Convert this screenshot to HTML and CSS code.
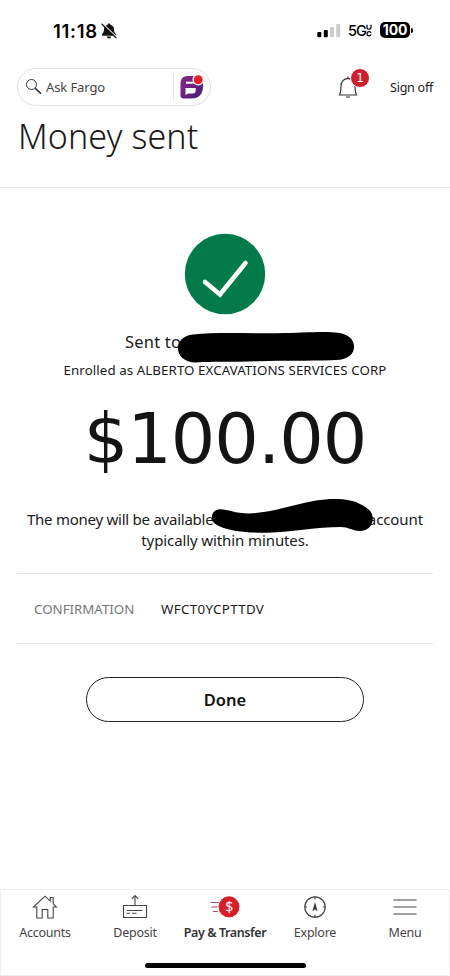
FILE: index.html
```html
<!DOCTYPE html>
<html lang="en">
<head>
<meta charset="utf-8">
<meta name="viewport" content="width=device-width, initial-scale=1">
<title>Money sent</title>
<link rel="stylesheet" href="styles.css">
</head>
<body>
<div class="screen">
  <div class="status">
    <span class="time">11:18</span>
    <svg class="mute" width="16" height="16" viewBox="0 0 16 16"><path d="M8 .5c-.8 0-1.300.5-1.400 1.200C4.300 2.300 3 4 3 6c0 3-.8 4-2 5.200-.5.600-.3 1.500.5 1.500h13c.8 0 1-.9.500-1.500-1.200-1.200-2-2.200-2-5.200 0-2-1.300-3.700-3.600-4.300C9.300 1 8.800.5 8 .5zM5.700 13.400c.3 1.200 1.200 2 2.300 2s2-.8 2.300-2z" fill="#111"/><path d="M2 1.200l13 12.300" stroke="#fff" stroke-width="1.500"/><path d="M1 1.200l14 13.600" stroke="#111" stroke-width="1.200" stroke-linecap="round"/></svg>
    <svg class="signal" width="24" height="16" viewBox="0 0 24 16"><rect x=".3" y="10" width="4" height="5.200" rx="1" fill="#000"/><rect x="6.800" y="8" width="4" height="7.200" rx="1" fill="#000"/><rect x="13" y="5" width="4" height="10.200" rx="1" fill="#ccc"/><rect x="19.200" y="2" width="4" height="13.200" rx="1" fill="#ccc"/></svg>
    <span class="net">5G</span><svg class="uc" width="6" height="13" viewBox="0 0 6 13" fill="none" stroke="#000" stroke-width="1.200"><path d="M1 .8v2.700c0 2.300 4 2.300 4 0V.8M5 9C4.600 7 1 7 1 9.700s3.600 2.700 4 .7"/></svg>
    <span class="battery">100</span><span class="tip"></span>
  </div>

  <header class="header">
    <div class="tools">
      <div class="search">
        <svg width="18" height="18" viewBox="0 0 18 18" fill="none" stroke="#333"><circle cx="6.500" cy="6.500" r="5" stroke-width="1"/><path d="M10.300 10.300l5.700 5.300" stroke-width="1.600"/></svg>
        <span class="ask">Ask Fargo</span>
        <span class="split"></span>
        <svg width="25" height="26" viewBox="0 0 25 26"><defs><linearGradient id="g" x1="0" y1="0" x2="1" y2="1"><stop offset="0" stop-color="#8c2480"/><stop offset="1" stop-color="#42207c"/></linearGradient></defs><path d="M8.500 2H24v10c0 8-4 12.500-11.500 12.500H4.500c-2 0-3-1-3-3V9.500C1.500 5 4 2 8.500 2z" fill="url(#g)"/><path d="M7 8.700h9.500" stroke="#fff" stroke-width="2"/><path d="M6.500 14h10.200v2.500c0 2-1 3-2.800 3H9.300L6.500 21z" fill="#fff"/><circle cx="19.200" cy="5.700" r="5.800" fill="#fff"/><circle cx="19.200" cy="5.700" r="4.500" fill="#e3202b"/></svg>
      </div>
      <div class="alerts">
        <svg width="20" height="24" viewBox="0 0 20 24" fill="none" stroke="#333" stroke-width="1.200"><path d="M1.500 20c1.400-2.500 1.300-5 1.500-9C3.200 6.500 5.500 3.700 10 3.300c4.500.4 6.800 3.200 7 7.700.2 4 .1 6.500 1.500 9zM10 3.300V1.500M8 22h4"/></svg>
        <span class="badge">1</span>
      </div>
      <a class="signoff">Sign off</a>
    </div>
    <h1>Money sent</h1>
  </header>

  <main>
    <svg class="check" width="82" height="82" viewBox="0 0 82 82"><circle cx="41" cy="41" r="40.200" fill="#027a49"/><path d="M21 49l15 12.500L61.500 30" fill="none" stroke="#fff" stroke-width="4.600" stroke-linecap="round"/></svg>
    <p class="sent"><span>Sent to</span><svg class="ink ink-name" width="178" height="34" viewBox="0 0 178 34"><path d="M16 3.500C40 .8 70 2.500 100 2.200 125 2 148 0 161 1.800c11 2 16 6.500 16 14 0 7-5 11.500-14 13-25 1.700-50 .2-80 1.400-25 1-48 .3-64 1.300C8 31.700 1 25 1 17.500 1 10 6.500 4.500 16 3.500z"/></svg></p>
    <p class="enrolled">Enrolled as ALBERTO EXCAVATIONS SERVICES CORP</p>
    <p class="amount">$100.00</p>
    <div class="note">
      <div class="line"><span class="avail">The money will be available</span><span class="acct">account</span></div>
      <div class="within">typically within minutes.</div>
      <svg class="ink ink-acct" width="164" height="36" viewBox="0 0 164 36"><path d="M9 11.200C16 11 24 15.500 39 15.400 62 14.500 84 6 105 2.500 122-.4 141 .3 151 7c8 4.500 11 8 10.700 14.500-.3 7-6 11.500-13 11.500-7.500-.3-11-4-19-4-24 0-46 5-74 5.700C36 34.800 20 33.500 9 28.500 3 26 .8 23.500.8 19.500.8 15 4 11.500 9 11.200z"/></svg>
    </div>
    <dl class="confirm"><dt>CONFIRMATION</dt><dd>WFCT0YCPTTDV</dd></dl>
    <button class="done">Done</button>
  </main>

  <nav class="nav">
    <div class="tabs">
      <div class="tab"><svg width="26" height="26" viewBox="0 0 26 26" fill="none" stroke="#444" stroke-width="1.100"><path d="M1.500 13L13 2.200l5.200 4.900V3.500h3v6.300l3.300 3.200h-3.300v11h-5.400v-8.500h-5.600V24H4.800V13z"/></svg><span>Accounts</span></div>
      <div class="tab"><svg width="26" height="26" viewBox="0 0 26 26" fill="none" stroke="#444" stroke-width="1.100"><path d="M1.500 11.500h23v12h-23zM13 11.500V1.500M9.800 4.800L13 1.500l3.200 3.300M4.800 16.500h15.500M4.800 19.300h3.500M10 19.300h4.500"/></svg><span>Deposit</span></div>
      <div class="tab active"><svg width="32" height="26" viewBox="0 0 32 26"><path d="M1.500 8.500h8M2.500 13h6M3.800 17.500h5" stroke="#a64a54" stroke-width="1.200"/><circle cx="20" cy="12.800" r="10.500" fill="#d71e2b"/><text x="20" y="18" text-anchor="middle" class="dollar">$</text></svg><span>Pay &amp; Transfer</span></div>
      <div class="tab"><svg width="26" height="26" viewBox="0 0 26 26" fill="none" stroke="#444" stroke-width="1.200"><circle cx="13" cy="13" r="10.200"/><path d="M13 2.800v2.400M13 20.800v2.400M2.800 13h2.400M20.800 13h2.400"/><path d="M13 8l-2.600 9.500L13 15.200l2.600 2.300z" fill="#333" stroke="none"/></svg><span>Explore</span></div>
      <div class="tab"><svg width="26" height="26" viewBox="0 0 26 26" stroke="#444" stroke-width="1.200"><path d="M1.500 6h23M1.500 13h23M1.500 20h23"/></svg><span>Menu</span></div>
    </div>
    <div class="home"></div>
  </nav>
</div>
</body>
</html>
```
FILE: styles.css
```css
* { box-sizing: border-box; margin: 0; padding: 0; }
body { background: #fff; color: #1a1a1a; font-family: "Noto Sans", "Open Sans", sans-serif; }
svg { display: block; flex: none; }
.screen { width: 450px; height: 976px; display: flex; flex-direction: column; overflow: hidden; }

.status { height: 60px; padding: 0 37px 0 53px; display: flex; align-items: center; font-family: Inter, sans-serif; color: #000; white-space: nowrap; }
.time { width: 48px; font-size: 18.500px; font-weight: 600; letter-spacing: .7px; margin-top: 1px; }
.mute { margin-top: 1px; }
.signal { margin-left: auto; margin-right: 7px; }
.net { width: 18px; font-size: 14.500px; font-weight: 500; letter-spacing: -1px; margin-top: 1px; }
.uc { margin-right: 8px; }
.battery { width: 30px; height: 16px; border-radius: 5px; background: #000; color: #fff; font-size: 14px; font-weight: 700; line-height: 16px; text-align: center; letter-spacing: -.2px; }
.tip { width: 2px; height: 5px; margin-left: 1px; border-radius: 0 2px 2px 0; background: #000; }

.header { height: 128px; border-bottom: 1px solid #e6e6e6; padding: 8px 17px 0; }
.tools { display: flex; align-items: center; height: 38px; }
.search { width: 194px; height: 38px; border: 1px solid #e2e0e0; border-radius: 19px; display: flex; align-items: center; padding: 0 5px 0 7px; }
.ask { width: 127px; margin-left: 3px; font-size: 13px; letter-spacing: -.1px; color: #444; white-space: nowrap; }
.split { width: 1px; height: 26px; background: #e4e4e4; margin-right: 5px; }
.alerts { position: relative; margin-left: 127px; width: 20px; height: 24px; }
.badge { position: absolute; left: 12px; top: -7px; width: 20px; height: 20px; border: 1px solid #fff; border-radius: 50%; background: #cf1f2d; color: #fff; font: 12px/18px "DejaVu Sans", sans-serif; text-align: center; }
.signoff { margin-left: auto; font-size: 12.500px; letter-spacing: -.25px; white-space: nowrap; }
h1 { margin: 8px 0 0 1px; font-size: 34px; line-height: 44px; font-weight: 300; letter-spacing: .1px; white-space: nowrap; }

main { display: flex; flex-direction: column; align-items: center; }
.check { margin-top: 45px; }
.sent { position: relative; width: 200px; height: 24px; margin-top: 15px; font-size: 16.500px; letter-spacing: .2px; line-height: 24px; }
.ink { position: absolute; fill: #000; }
.ink-name { left: 52px; top: 1px; }
.enrolled { margin-top: 6px; font-size: 13.300px; letter-spacing: .08px; line-height: 20px; white-space: nowrap; }
.amount { margin-top: 24px; font: 70px/70px "DejaVu Sans", sans-serif; letter-spacing: -1px; color: #141414; }
.note { position: relative; width: 396px; margin-top: 35px; font-size: 15px; letter-spacing: -.1px; line-height: 20px; }
.line { display: flex; justify-content: space-between; white-space: nowrap; }
.avail { letter-spacing: -.25px; }
.within { padding-top: 1px; text-align: center; }
.ink-acct { left: 184px; top: -11px; }
.confirm { width: 416px; height: 71px; margin-top: 23px; border: solid #e5e5e5; border-width: 1px 0; display: flex; align-items: center; padding: 1px 0 0 17px; font-size: 13.300px; }
dt { width: 127px; color: #777; }
dd { letter-spacing: .35px; }
.done { width: 278px; height: 45px; margin-top: 33px; padding-top: 1px; border: 1px solid #222; border-radius: 23px; background: #fff; color: #111; font: 600 16.500px/42px "Noto Sans", sans-serif; }

.nav { height: 87px; margin-top: auto; border: 1px solid #eee; display: flex; flex-direction: column; align-items: center; }
.tabs { width: 450px; display: grid; grid-template-columns: repeat(5, 90px); padding-top: 4px; }
.tab { display: flex; flex-direction: column; align-items: center; gap: 3px; font-size: 12.500px; letter-spacing: -.25px; line-height: 20px; color: #444; white-space: nowrap; }
.active { font-weight: 600; letter-spacing: -.4px; color: #333; }
.dollar { font: 14px "Noto Sans", sans-serif; fill: #fff; }
.home { width: 161px; height: 5px; margin-top: 20px; border-radius: 3px; background: #000; }
```
